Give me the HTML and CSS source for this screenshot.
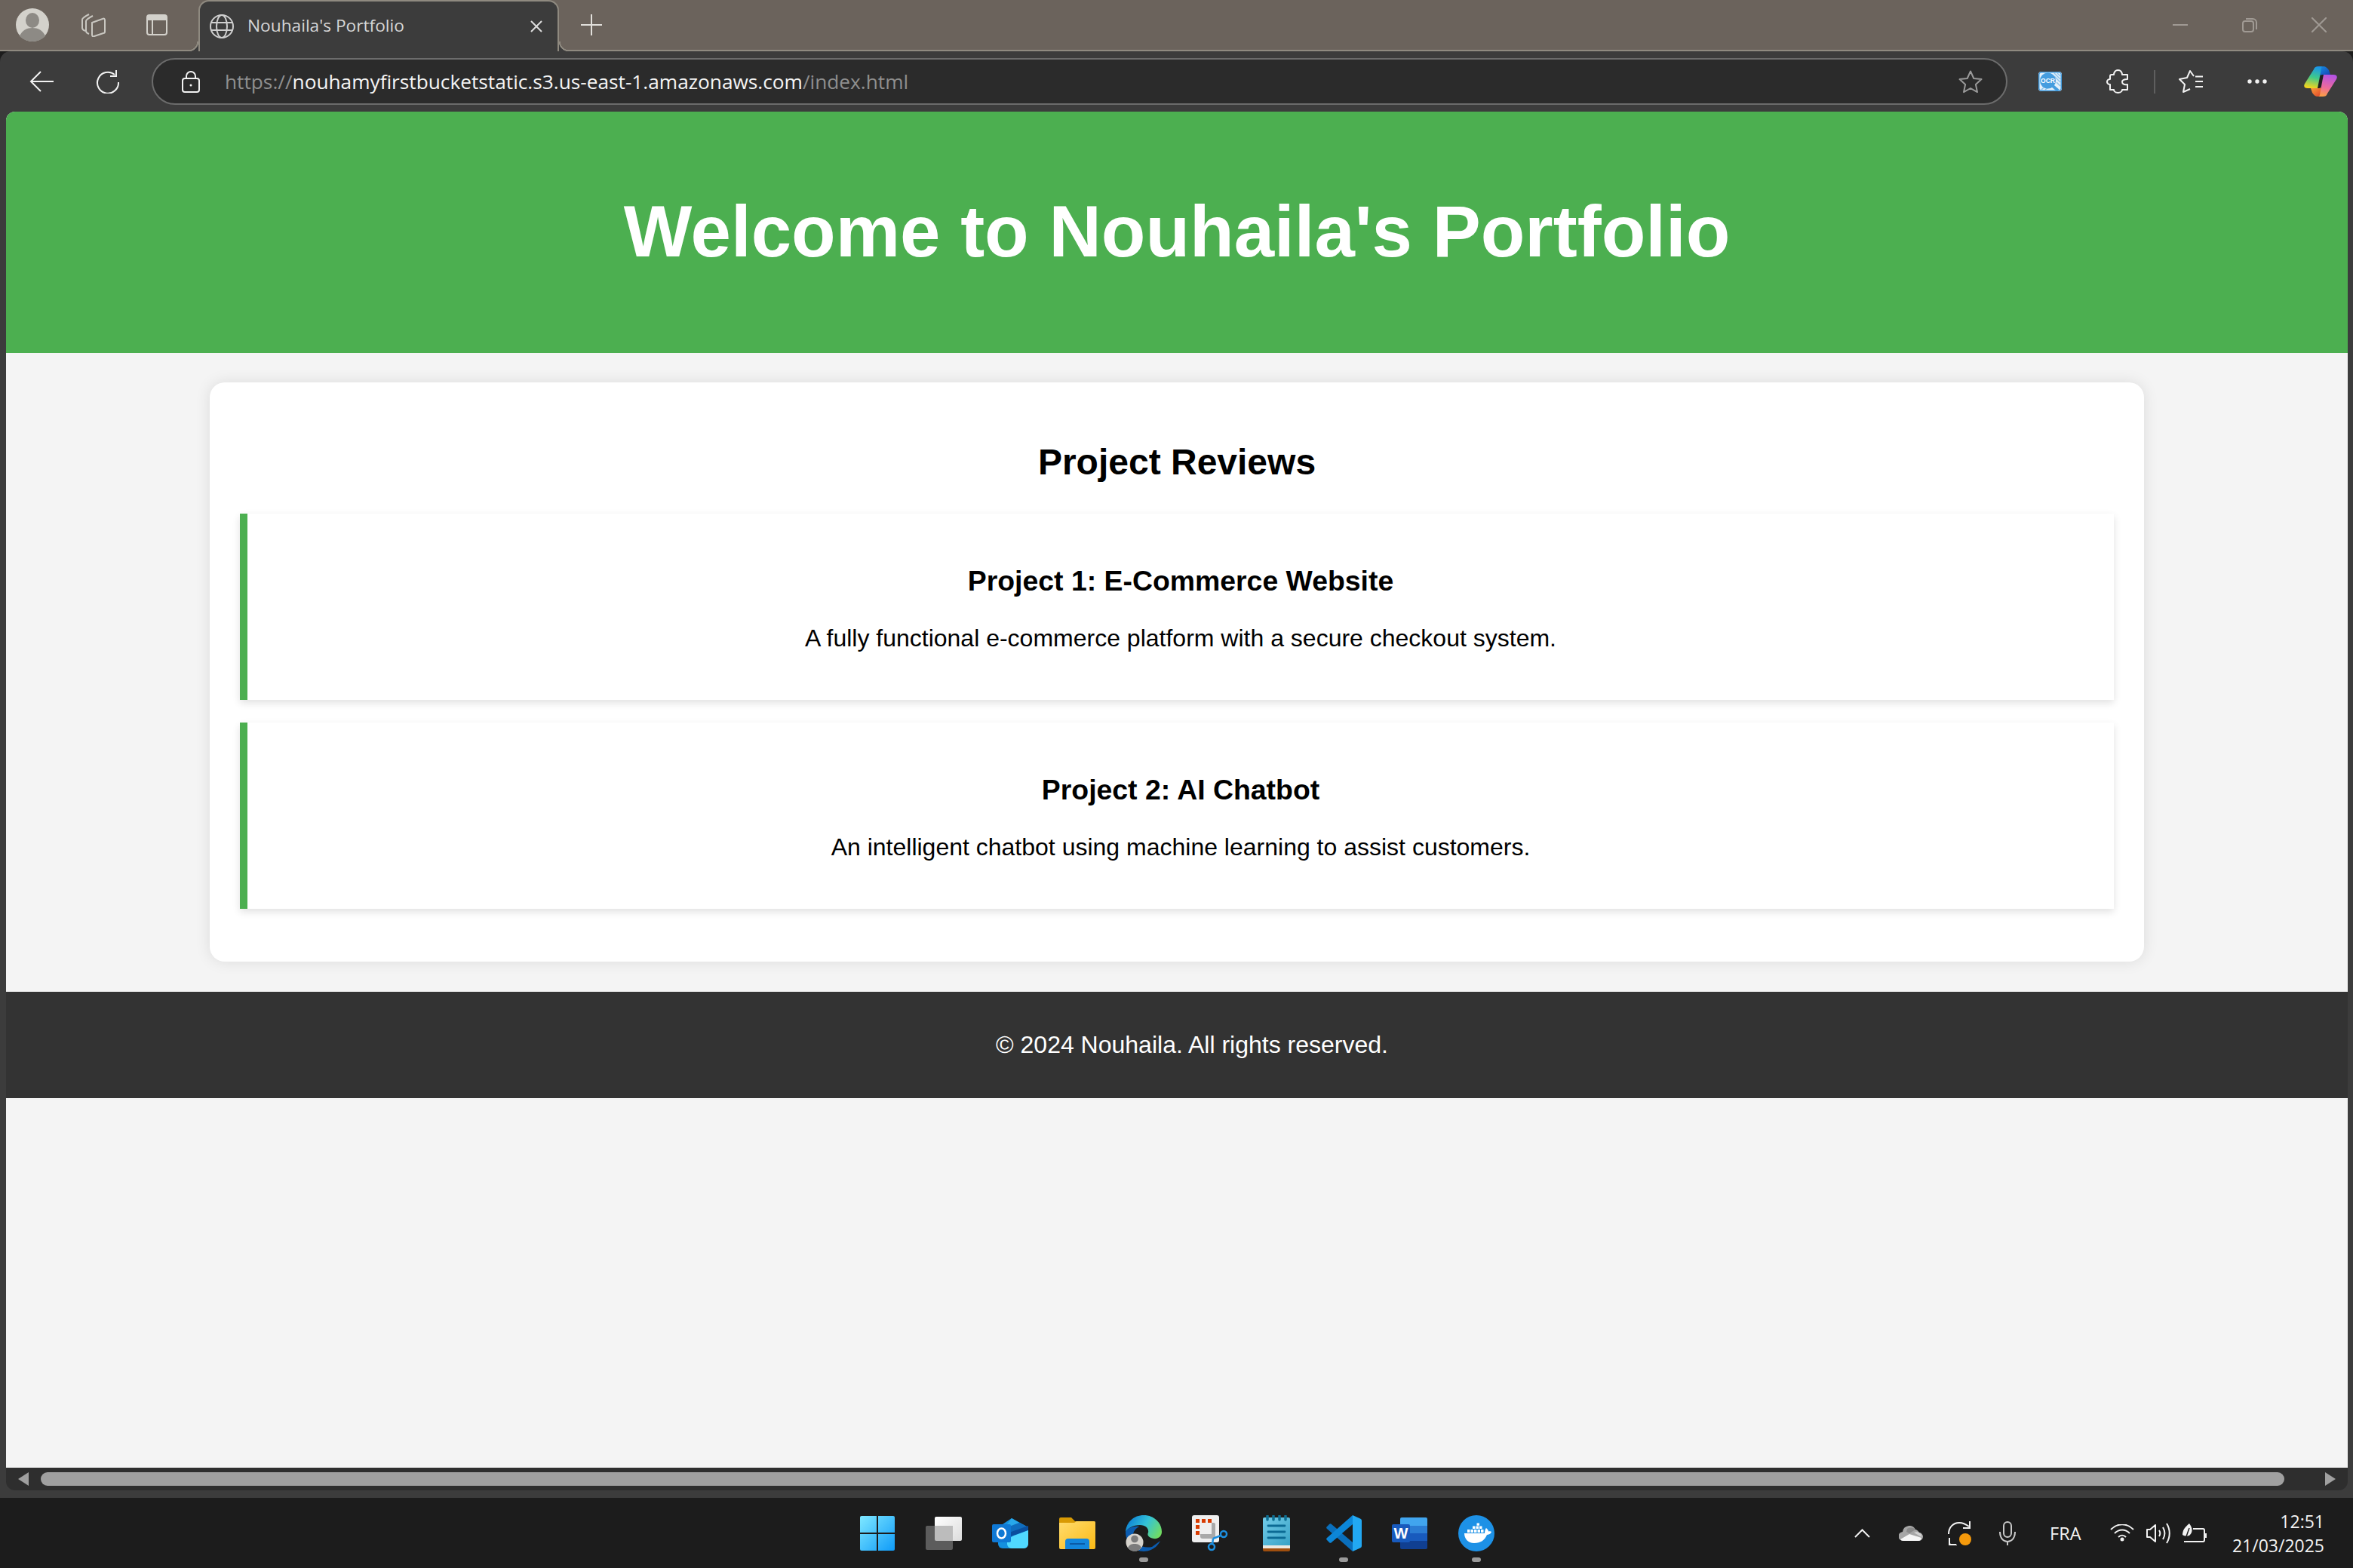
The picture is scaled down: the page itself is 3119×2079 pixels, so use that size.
FILE: index.html
```html
<!DOCTYPE html>
<html lang="en">
<head>
    <meta charset="UTF-8">
    <title>Nouhaila's Portfolio</title>
    <link rel="stylesheet" href="styles.css">
</head>
<body>
    <div class="titlebar">
        <svg class="ic-avatar" viewBox="0 0 44 44"><circle cx="22" cy="22" r="22" fill="#d3d1cb"/><ellipse cx="22" cy="16" rx="9" ry="10" fill="#8d8a85"/><path d="M5 37c3-8 10-11 17-11s14 3 17 11c-4 4-10 7-17 7S9 41 5 37z" fill="#8d8a85"/></svg>
        <svg class="ic-collections" viewBox="0 0 32 32" fill="none" stroke="#c9c7c1" stroke-width="2" stroke-linejoin="round"><path d="M5 24c-3-1-4-2-4-4V9c0-2 3-4 9-7"/><path d="M10 28c-3-1-4-2-4-4V11c0-2 3-4 9-7"/><path d="M14 13l14-5c2-1 3 0 3 2v15c0 1-1 2-2 2l-12 4c-2 1-3 0-3-2z"/></svg>
        <svg class="ic-tabs" viewBox="0 0 28 28"><rect x="1" y="1" width="26" height="26" rx="3" fill="none" stroke="#d3d1cb" stroke-width="2"/><path d="M1 4a3 3 0 0 1 3-3h20a3 3 0 0 1 3 3v4H1z" fill="#d3d1cb"/><path d="M8 8v19" stroke="#d3d1cb" stroke-width="2"/></svg>
        <div class="tab">
            <svg class="ic-globe" viewBox="0 0 32 32" fill="none" stroke="#cfcfcf" stroke-width="2"><circle cx="16" cy="16" r="15"/><ellipse cx="16" cy="16" rx="7" ry="15"/><path d="M2 11h28M2 21h28"/></svg>
            <span class="tab-title">Nouhaila's Portfolio</span>
            <svg class="ic-close" viewBox="0 0 16 16" stroke="#dcdcdc" stroke-width="2"><path d="M1 1l14 14M15 1L1 15"/></svg>
        </div>
        <svg class="ic-plus" viewBox="0 0 28 28" stroke="#e2e0dc" stroke-width="2"><path d="M14 0v28M0 14h28"/></svg>
        <div class="win-controls">
            <svg viewBox="0 0 20 20" stroke="#a09a94" stroke-width="2"><path d="M0 10h20"/></svg>
            <svg viewBox="0 0 20 20" fill="none" stroke="#a09a94" stroke-width="2"><rect x="1" y="5" width="14" height="14" rx="3"/><path d="M5 2h9a5 5 0 0 1 5 5v9"/></svg>
            <svg viewBox="0 0 20 20" stroke="#a09a94" stroke-width="2"><path d="M0 0l20 20M20 0L0 20"/></svg>
        </div>
    </div>

    <div class="shell">
        <div class="toolbar">
            <svg class="ic-back" viewBox="0 0 32 28" fill="none" stroke="#f2f2f2" stroke-width="2"><path d="M32 14H2M15 1L2 14l13 13"/></svg>
            <svg class="ic-reload" viewBox="0 0 33 31" fill="none" stroke="#f2f2f2" stroke-width="2"><path d="M25 6a14 14 0 1 0 5 10"/><path d="M27 0v8h-8"/></svg>
            <div class="urlbar">
                <svg class="ic-lock" viewBox="0 0 24 29" fill="none" stroke="#f2f2f2" stroke-width="2"><rect x="1" y="10" width="22" height="18" rx="3"/><path d="M6 10V7a6 6 0 0 1 12 0v3"/><circle cx="12" cy="19" r="1.500" fill="#f2f2f2" stroke="none"/></svg>
                <span class="url"><span class="url-dim">https://</span>nouhamyfirstbucketstatic.s3.us-east-1.amazonaws.com<span class="url-dim">/index.html</span></span>
                <svg class="ic-star" viewBox="0 0 32 31" fill="none" stroke="#9a9a9a" stroke-width="2" stroke-linejoin="round"><path d="M16 1.500l4.300 9.500 10.200 1.100-7.600 6.900 2.100 10.100L16 24l-9 5.100 2.100-10.100-7.600-6.900L11.700 11z"/></svg>
            </div>
            <svg class="ic-ocr" viewBox="0 0 31 26"><rect width="31" height="26" rx="4" fill="#e4f1fb"/><path d="M21 2l8 8M25 2l4 4M21 6l8 8M24 14l5 5M4 24l5-5M9 24l4-3" stroke="#8ec2ea" stroke-width="1.500"/><rect x="0.750" y="0.750" width="29.500" height="24.500" rx="3.500" fill="none" stroke="#459ddf" stroke-width="1.500"/><circle cx="12.500" cy="12" r="10.500" fill="#459ddf"/><path d="M19 19l7 6" stroke="#459ddf" stroke-width="4"/><text x="12.500" y="15" class="ocr-text">OCR</text></svg>
            <svg class="ic-puzzle" viewBox="0 0 29 32" fill="none" stroke="#f2f2f2" stroke-width="2" stroke-linejoin="round"><path d="M10 7C10 7 10 1 15.500 1S21 7 21 7H28V13C23 13 21 14.500 21 16.500S23 21 28 20V27H21C21 27 21 31 15.500 31S10 27 10 27H5V20C1 20 1 16.500 1 16.500S1 13 5 13V9Q5 7 7 7Z"/></svg>
            <div class="tool-sep"></div>
            <svg class="ic-fav" viewBox="0 0 32 30" fill="none" stroke="#f2f2f2" stroke-width="2" stroke-linejoin="round"><path d="M20 8L15 1l-4 9-10 2 7 7-2 10 9-4"/><path d="M22 8.500h10M22 15h10M22 22h10"/></svg>
            <svg class="ic-dots" viewBox="0 0 26 6" fill="#f2f2f2"><circle cx="3" cy="3" r="2.700"/><circle cx="13" cy="3" r="2.700"/><circle cx="23" cy="3" r="2.700"/></svg>
            <svg class="ic-copilot" viewBox="0 0 44 40">
                <defs>
                    <linearGradient id="cpA" x1="0.600" y1="0" x2="0.400" y2="1"><stop offset="0" stop-color="#1a95ea"/><stop offset="0.500" stop-color="#3fc98a"/><stop offset="1" stop-color="#f6d41c"/></linearGradient>
                    <linearGradient id="cpB" x1="0.600" y1="0" x2="0.400" y2="1"><stop offset="0" stop-color="#b452e4"/><stop offset="0.600" stop-color="#ec6a9c"/><stop offset="1" stop-color="#fb9d48"/></linearGradient>
                    <linearGradient id="cpC" x1="0" y1="0" x2="1" y2="1"><stop offset="0" stop-color="#1490e4"/><stop offset="1" stop-color="#1a3fb0"/></linearGradient>
                    <linearGradient id="cpD" x1="0" y1="0" x2="1" y2="1"><stop offset="0" stop-color="#f9a03a"/><stop offset="1" stop-color="#e0402a"/></linearGradient>
                </defs>
                <path d="M22 11h4l-4 18h-4z" fill="#1f1f1f"/>
                <path d="M25 0C29 0 31 2 33 5L35 11H26C24 11 23 11 22 12L20 8C20 4 21 1 25 0Z" fill="url(#cpC)"/>
                <path d="M19 40C15 40 13 38 11 35L9 29H18C20 29 21 29 22 28L24 32C24 36 23 39 19 40Z" fill="url(#cpD)"/>
                <path d="M13 4C14 1 16 0 19 0H25C22 1 23 4 22 8L18 29H5C1 29 -1 27 1 23z" fill="url(#cpA)"/>
                <path d="M31 36C30 39 28 40 25 40H19C22 39 21 36 22 32L26 11H39C43 11 45 13 43 17z" fill="url(#cpB)"/>
            </svg>
        </div>

        <div class="page">
            <header class="site-header">
                <h1>Welcome to Nouhaila's Portfolio</h1>
            </header>
            <section class="container">
                <h2>Project Reviews</h2>
                <div class="review">
                    <h3>Project 1: E-Commerce Website</h3>
                    <p>A fully functional e-commerce platform with a secure checkout system.</p>
                </div>
                <div class="review">
                    <h3>Project 2: AI Chatbot</h3>
                    <p>An intelligent chatbot using machine learning to assist customers.</p>
                </div>
            </section>
            <footer class="site-footer">© 2024 Nouhaila. All rights reserved.</footer>
        </div>

        <div class="hscroll">
            <span class="arrow-left"></span>
            <span class="thumb"></span>
            <span class="arrow-right"></span>
        </div>
    </div>

    <div class="taskbar">
        <div></div>
        <div class="task-icons">
            <div class="task">
                <svg width="46" height="46" viewBox="0 0 46 46"><defs><linearGradient id="winG" x1="0" y1="0" x2="1" y2="1"><stop offset="0" stop-color="#7fe8ff"/><stop offset="1" stop-color="#0f9bf8"/></linearGradient></defs><path fill="url(#winG)" d="M2 0h20v22H0V2a2 2 0 0 1 2-2zM24 0h20a2 2 0 0 1 2 2v20H24zM0 24h22v22H2a2 2 0 0 1-2-2zM24 24h22v20a2 2 0 0 1-2 2H24z"/></svg>
            </div>
            <div class="task">
                <svg width="48" height="44" viewBox="0 0 48 44"><defs><linearGradient id="tvG" x1="0" y1="0" x2="1" y2="1"><stop offset="0" stop-color="#fff"/><stop offset="1" stop-color="#dcdcdc"/></linearGradient></defs><rect x="12" y="0" width="36" height="32" rx="2" fill="url(#tvG)"/><rect x="0" y="12" width="36" height="32" rx="2" fill="#5c5c5c"/><path d="M12 12h24v20H14a2 2 0 0 1-2-2z" fill="#bcbcbc"/></svg>
            </div>
            <div class="task">
                <svg width="48" height="40" viewBox="0 0 48 40"><path d="M26 0l22 12v22a6 6 0 0 1-6 6H14a6 6 0 0 1-6-6V12z" fill="#1490df"/><path d="M26 0l10 6-22 10z" fill="#28a8ea"/><path d="M20 12L36 6l12 6v3L20 24z" fill="#0f6cbd"/><path d="M20 20L48 10v6L20 26z" fill="#0a4f9e"/><path d="M20 32c0-4 6-8 12-10l16-6v18a6 6 0 0 1-6 6H26a6 6 0 0 1-6-6z" fill="#50d9ff"/><rect x="0" y="8" width="25" height="24" rx="2" fill="#0f78d4"/><ellipse cx="12.500" cy="20" rx="5.500" ry="6.500" fill="none" stroke="#fff" stroke-width="2.500"/></svg>
            </div>
            <div class="task">
                <svg width="48" height="42" viewBox="0 0 48 42"><defs><linearGradient id="fdG" x1="0" y1="0" x2="1" y2="1"><stop offset="0" stop-color="#ffdc6e"/><stop offset="1" stop-color="#fbb914"/></linearGradient></defs><path d="M0 2a2 2 0 0 1 2-2h14l5 5h25a2 2 0 0 1 2 2v4H0z" fill="#d89a04"/><path d="M0 7h20l3-2h23a2 2 0 0 1 2 2v33a2 2 0 0 1-2 2H2a2 2 0 0 1-2-2z" fill="url(#fdG)"/><path d="M8 42V32a4 4 0 0 1 4-4h24a4 4 0 0 1 4 4v10z" fill="#1386dc"/><path d="M14 35h20" stroke="#0b5aa5" stroke-width="2"/></svg>
            </div>
            <div class="task">
                <svg width="48" height="48" viewBox="0 0 48 48"><defs><linearGradient id="edgeG" x1="0" y1="0.300" x2="1" y2="0.700"><stop offset="0" stop-color="#0c7fd4"/><stop offset="0.500" stop-color="#33c2d8"/><stop offset="1" stop-color="#72dc60"/></linearGradient></defs><path d="M0 22C3 17 10 14 18 15 12 18 9 23 10 30 12 39 22 44 35 42L46 34C41 44 32 48 24 48 10 48 0 36 0 22Z" fill="#0b5cb0"/><path d="M0 22C1 9 11 0 24 0 38 0 48 10 48 22 48 28 43 32 37 31 31 30 28 27 30 23 31 18 27 13 19 13 10 13 3 17 0 22Z" fill="url(#edgeG)"/><circle cx="12" cy="36" r="11.500" fill="#d6d3cd"/><circle cx="12" cy="31.500" r="4.800" fill="#7c7c7c"/><path d="M3 43c2-4 5-5 9-5s7 1 9 5c-2 3-5 4.500-9 4.500s-7-1.500-9-4.500z" fill="#7c7c7c"/></svg>
                <span class="running"></span>
            </div>
            <div class="task">
                <svg width="48" height="48" viewBox="0 0 48 48"><rect width="36" height="36" rx="3" fill="#efefef"/><path d="M5 5h5v5H5zM13 5h5v5h-5zM21 5h5v5h-5zM5 13h5v5H5zM5 21h5v5H5z" fill="#d83b01"/><path d="M26 10h3a2 2 0 0 1 2 2v19H14a3 3 0 0 1-3-3v-3h15z" fill="#a9a9a9"/><path d="M28 31l10-4M28 31l-1 8" stroke="#1c8fe0" stroke-width="2.500"/><circle cx="42" cy="25" r="4" fill="none" stroke="#1c8fe0" stroke-width="2.500"/><circle cx="26" cy="42" r="4" fill="none" stroke="#1c8fe0" stroke-width="2.500"/></svg>
            </div>
            <div class="task">
                <svg width="36" height="48" viewBox="0 0 36 48"><defs><linearGradient id="npG" x1="0" y1="0" x2="1" y2="1"><stop offset="0" stop-color="#72cbe8"/><stop offset="1" stop-color="#38a2c6"/></linearGradient></defs><path d="M0 5a2 2 0 0 1 2-2h32a2 2 0 0 1 2 2v35H0z" fill="url(#npG)"/><rect y="40" width="36" height="4" fill="#ece8e0"/><path d="M0 44h36v2a2 2 0 0 1-2 2H2a2 2 0 0 1-2-2z" fill="#a04f0e"/><path d="M6 1v5M14 1v5M22 1v5M30 1v5" stroke="#0e6f92" stroke-width="3.500" stroke-linecap="round"/><path d="M7 14h22M7 22h22M7 30h22" stroke="#0b6a94" stroke-width="2.800" stroke-linecap="round"/></svg>
            </div>
            <div class="task">
                <svg width="48" height="48" viewBox="0 0 48 48"><path d="M36 48L2 18a2 2 0 0 1 0-3l3-3a2 2 0 0 1 3 0L36 36z" fill="#0a6fbc"/><path d="M36 0L2 30a2 2 0 0 0 0 3l3 3a2 2 0 0 0 3 0L36 12z" fill="#0c86d8"/><path d="M36 0l10 4.500a3 3 0 0 1 2 3v33a3 3 0 0 1-2 3L36 48z" fill="#22a8f2"/></svg>
                <span class="running"></span>
            </div>
            <div class="task">
                <svg width="47" height="42" viewBox="0 0 47 42"><path d="M11 2a2 2 0 0 1 2-2h32a2 2 0 0 1 2 2v9H11z" fill="#41a5ee"/><rect x="11" y="11" width="36" height="10" fill="#2b7cd3"/><rect x="11" y="21" width="36" height="10" fill="#185abd"/><path d="M11 31h36v9a2 2 0 0 1-2 2H13a2 2 0 0 1-2-2z" fill="#103f91"/><rect y="9" width="24" height="24" rx="2" fill="#185abd"/><text x="12" y="28" class="word-text">W</text></svg>
            </div>
            <div class="task">
                <svg width="48" height="48" viewBox="0 0 48 48"><circle cx="24" cy="24" r="24" fill="#1d91e6"/><path d="M8 24H35C35 21 36 18 37 17 39 19 40 20 40 21.500 42 21 43 21 44 22 43 25 40 26 38 26 35 33 30 37 21 37 13 37 8 31 8 24Z" fill="#fff"/><path d="M12 19h3.500v4H12zM16.500 19h3.500v4h-3.500zM21 19h3.500v4H21zM25.500 19H29v4h-3.500zM30 19h3.500v4H30zM19 14.500h3.500v3.500H19zM23.500 14.500H27v3.500h-3.500zM28 14.500h3.500v3.500H28zM24.500 10.500H28v3.200h-3.500z" fill="#fff"/></svg>
                <span class="running"></span>
            </div>
        </div>
        <div class="tray">
            <svg class="ic-chevron" viewBox="0 0 21 12" fill="none" stroke="#f2f2f2" stroke-width="2"><path d="M1 11L10.500 1.500 20 11"/></svg>
            <svg class="ic-cloud" viewBox="0 0 32 20"><path d="M6 20a6 6 0 0 1-1-12 9 9 0 0 1 17-3 7 7 0 0 1 5 4 5.500 5.500 0 0 1-1 11z" fill="#a6a6a6"/><path d="M11 4a9 9 0 0 1 11 1l-8 5-4-2z" fill="#8a8a8a"/><path d="M20 9l4-1 3 1a5.500 5.500 0 0 1 3 6z" fill="#d0d0d0"/><path d="M2 18l12-7 16 5c-1 3-2 4-4 4H6c-2 0-3-1-4-2z" fill="#f6f6f6"/></svg>
            <svg class="ic-sync" viewBox="0 0 32 32" fill="none" stroke="#f2f2f2" stroke-width="2"><path d="M2 17C2 8 8 2 16 2c5 0 9 2 13 5"/><path d="M30 0v9h-9"/><path d="M3 22v9h9M3 30c3 2 6 2 10 2"/><circle cx="24" cy="24" r="8" fill="#f59a0c" stroke="none"/></svg>
            <svg class="ic-mic" viewBox="0 0 22 32" fill="none" stroke="#c8c8c8" stroke-width="2"><rect x="6" y="1" width="10" height="20" rx="5"/><path d="M1 14c0 9 5 13 10 13s10-4 10-13M11 27v5"/></svg>
            <span class="lang">FRA</span>
            <svg class="ic-wifi" viewBox="0 0 32 23" fill="none" stroke="#f2f2f2" stroke-width="2"><path d="M1 8c9-9 21-9 30 0M6 13c6-6 14-6 20 0M11 18c3-3 7-3 10 0" transform="translate(0 -1)"/><circle cx="16" cy="20" r="2.500" fill="#f2f2f2" stroke="none"/></svg>
            <svg class="ic-speaker" viewBox="0 0 32 28" fill="none" stroke="#f2f2f2" stroke-width="2" stroke-linejoin="round"><path d="M1 9h4l7-6v22l-7-6H1z"/><path d="M17 10c2 3 2 5 0 8M22 6c3 5 3 11 0 16M27 1c5 8 5 18 0 26"/></svg>
            <svg class="ic-battery" viewBox="0 0 32 26" fill="none" stroke="#f2f2f2" stroke-width="2"><path d="M14 7h13a2 2 0 0 1 2 2v13a2 2 0 0 1-2 2H2"/><path d="M31 13v6"/><path d="M0 15C0 7 6 3 9 0c4 5 5 11 1 15-2 2-7 2-10 0z" fill="#f2f2f2" stroke="none"/><path d="M9 6L3 23" stroke="#1c1c1c" stroke-width="1.500"/></svg>
            <div class="clock">
                <span>12:51</span>
                <span>21/03/2025</span>
            </div>
        </div>
    </div>
</body>
</html>
```

FILE: styles.css
```css
* {
    box-sizing: border-box;
}
html, body {
    margin: 0;
    height: 100%;
    overflow: hidden;
}
body {
    width: 3119px;
    height: 2079px;
    display: flex;
    flex-direction: column;
    font-family: "Liberation Sans", Arial, sans-serif;
    background-color: #1c1c1c;
}
svg {
    display: block;
    flex: none;
}

/* browser title bar */
.titlebar {
    height: 68px;
    display: flex;
    align-items: center;
    background-color: #6b635c;
    border-bottom: 2px solid #8f8a80;
}
.ic-avatar {
    width: 44px;
    height: 44px;
    margin-left: 21px;
}
.ic-collections {
    width: 32px;
    height: 32px;
    margin-left: 43px;
}
.ic-tabs {
    width: 28px;
    height: 28px;
    margin-left: 54px;
}
.tab {
    width: 478px;
    height: 68px;
    margin-left: 41px;
    padding: 0 20px 0 13px;
    display: flex;
    align-items: center;
    align-self: flex-start;
    background-color: #3c3c3c;
    border: 2px solid #8f8a80;
    border-bottom: none;
    border-radius: 14px 14px 0 0;
    position: relative;
    z-index: 1;
}
.tab::before,
.tab::after {
    content: "";
    position: absolute;
    bottom: 0;
    width: 13px;
    height: 13px;
}
.tab::before {
    left: -15px;
    background: radial-gradient(circle at 0 0, transparent 11px, #8f8a80 11.5px, #8f8a80 13px, #3c3c3c 13.5px);
}
.tab::after {
    right: -15px;
    background: radial-gradient(circle at 100% 0, transparent 11px, #8f8a80 11.5px, #8f8a80 13px, #3c3c3c 13.5px);
}
.ic-globe {
    width: 32px;
    height: 32px;
}
.tab-title {
    margin: 0 0 3px 18px;
    flex: 1;
    font-family: "Open Sans", sans-serif;
    font-size: 22.7px;
    color: #d6d6d6;
}
.ic-close {
    width: 16px;
    height: 16px;
}
.ic-plus {
    width: 28px;
    height: 28px;
    margin-left: 29px;
}
.win-controls {
    margin-left: auto;
    padding-right: 35px;
    display: flex;
    gap: 72px;
}
.win-controls svg {
    width: 20px;
    height: 20px;
}

/* toolbar and page frame */
.shell {
    height: 1918px;
    display: flex;
    flex-direction: column;
    background-color: #3c3c3c;
    padding: 0 7px 10px 8px;
    border-radius: 14px 14px 0 0;
}
.toolbar {
    height: 80px;
    display: flex;
    align-items: center;
    margin-left: -8px;
    margin-right: -7px;
}
.ic-back {
    width: 32px;
    height: 28px;
    margin-left: 39px;
}
.ic-reload {
    width: 33px;
    height: 31px;
    margin-left: 56px;
}
.urlbar {
    width: 2460px;
    height: 62px;
    margin-left: 41px;
    padding: 0 31px 0 38px;
    display: flex;
    align-items: center;
    background-color: #2b2b2b;
    border: 2px solid #6c6c6c;
    border-radius: 31px;
}
.ic-lock {
    width: 24px;
    height: 29px;
}
.url {
    margin-left: 33px;
    flex: 1;
    font-family: "Open Sans", sans-serif;
    font-size: 26.25px;
    color: #f5f5f5;
    white-space: nowrap;
}
.url-dim {
    color: #8f8f8f;
}
.ic-star {
    width: 32px;
    height: 31px;
}
.ic-ocr {
    width: 31px;
    height: 26px;
    margin-left: 41px;
}
.ocr-text {
    font-family: "Liberation Sans", sans-serif;
    font-size: 8.5px;
    font-weight: bold;
    fill: #fff;
    text-anchor: middle;
}
.ic-puzzle {
    width: 29px;
    height: 32px;
    margin-left: 59px;
}
.tool-sep {
    width: 2px;
    height: 31px;
    margin-left: 34px;
    background-color: #5f5f5f;
}
.ic-fav {
    width: 32px;
    height: 30px;
    margin-left: 31px;
}
.ic-dots {
    width: 26px;
    height: 6px;
    margin-left: 59px;
}
.ic-copilot {
    width: 44px;
    height: 40px;
    margin-left: 49px;
}

/* the page itself */
.page {
    flex: 1;
    background-color: #f4f4f4;
    border-radius: 12px 12px 0 0;
    overflow: hidden;
}
.site-header {
    height: 320px;
    padding-bottom: 2px;
    display: flex;
    align-items: center;
    justify-content: center;
    background-color: #4caf50;
    color: white;
}
.site-header h1 {
    margin: 0;
    font-size: 96px;
}
.container {
    width: 2564px;
    margin: 39px auto 40px;
    padding: 40px;
    background: white;
    border-radius: 20px;
    box-shadow: 0 0 20px rgba(0, 0, 0, 0.1);
}
.container h2 {
    margin: 32px 0 34px;
    text-align: center;
    font-size: 48px;
    line-height: 68px;
}
.review {
    height: 247px;
    margin-bottom: 30px;
    padding-top: 68px;
    background: white;
    border-left: 10px solid #4caf50;
    box-shadow: 0 4px 10px rgba(0, 0, 0, 0.12);
    text-align: center;
}
.review h3 {
    margin: 0 0 37px;
    font-size: 37.4px;
    line-height: 42px;
}
.review p {
    margin: 0;
    font-size: 32px;
    line-height: 36px;
}
.site-footer {
    height: 141px;
    padding-left: 40px;
    display: flex;
    align-items: center;
    justify-content: center;
    background-color: #333;
    color: white;
    font-size: 32px;
}

/* horizontal scrollbar */
.hscroll {
    height: 30px;
    padding: 6px 16px 6px 16px;
    display: flex;
    align-items: center;
    background-color: #2e2e2e;
    border-radius: 0 0 12px 12px;
}
.arrow-left {
    width: 0;
    height: 0;
    border-style: solid;
    border-width: 9px 14px 9px 0;
    border-color: transparent #a0a0a0 transparent transparent;
}
.thumb {
    width: 2974px;
    height: 18px;
    margin-left: 16px;
    background-color: #a0a0a0;
    border-radius: 9px;
}
.arrow-right {
    width: 0;
    height: 0;
    margin-left: auto;
    border-style: solid;
    border-width: 9px 0 9px 14px;
    border-color: transparent transparent transparent #a0a0a0;
}

/* windows taskbar */
.taskbar {
    height: 93px;
    display: grid;
    grid-template-columns: 1fr auto 1fr;
    align-items: center;
    background-color: #1c1c1c;
}
.task-icons {
    display: flex;
    padding-left: 1px;
}
.task {
    width: 88.25px;
    height: 48px;
    display: flex;
    align-items: center;
    justify-content: center;
    position: relative;
}
.word-text {
    font-family: "Liberation Sans", sans-serif;
    font-size: 20px;
    font-weight: bold;
    fill: #fff;
    text-anchor: middle;
}
.running {
    position: absolute;
    left: 38px;
    bottom: -14px;
    width: 12px;
    height: 6px;
    border-radius: 3px;
    background-color: #9a9a9a;
}
.tray {
    display: flex;
    align-items: center;
    justify-content: flex-end;
    padding-right: 38px;
    color: #f2f2f2;
    font-family: "Open Sans", sans-serif;
}
.ic-chevron {
    width: 21px;
    height: 12px;
}
.ic-cloud {
    width: 32px;
    height: 20px;
    margin-left: 38px;
}
.ic-sync {
    width: 32px;
    height: 32px;
    margin-left: 32px;
}
.ic-mic {
    width: 22px;
    height: 32px;
    margin-left: 37px;
}
.lang {
    width: 40px;
    margin-left: 45px;
    font-size: 23.5px;
    text-align: center;
    white-space: nowrap;
}
.ic-wifi {
    width: 32px;
    height: 23px;
    margin-left: 40px;
}
.ic-speaker {
    width: 32px;
    height: 28px;
    margin-left: 16px;
}
.ic-battery {
    width: 32px;
    height: 26px;
    margin-left: 16px;
}
.clock {
    width: 156px;
    display: flex;
    flex-direction: column;
    align-items: flex-end;
    gap: 4px;
    font-size: 23px;
    line-height: 28px;
}
```
